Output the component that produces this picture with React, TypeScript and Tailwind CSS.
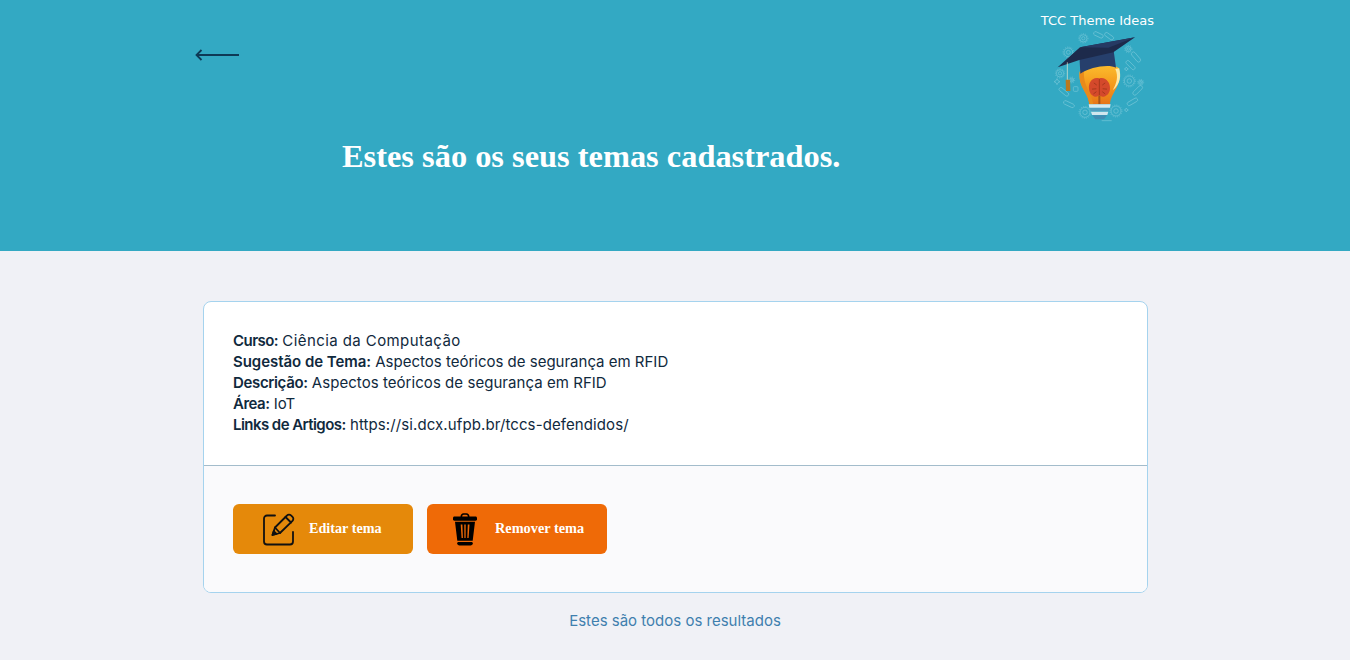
const bodyFont = "font-['Inter','Noto_Sans',sans-serif]";

const Arrow = () => (
  <svg width="45" height="14" viewBox="0 0 45 14" fill="none" stroke="#0e3a56">
    <path d="M44 7H2" strokeWidth="1.800" />
    <path d="M6.500 2L1.500 7l5 5" strokeWidth="1.800" />
  </svg>
);

const Gear = ({ x, y, r }: { x: number; y: number; r: number }) => (
  <g>
    <circle cx={x} cy={y} r={r} />
    <circle cx={x} cy={y} r={r * 0.45} />
    <circle cx={x} cy={y} r={r + 3} strokeDasharray="3 4" />
  </g>
);

const Logo = () => (
  <svg width="100" height="95" viewBox="60 75 300 285" className="ml-[5px] mt-px">
    <defs>
      <linearGradient id="bulb" x1="0" y1="0" x2="0" y2="1">
        <stop offset="0" stopColor="#fbbd2e" />
        <stop offset="0.5" stopColor="#f59a1c" />
        <stop offset="1" stopColor="#e67418" />
      </linearGradient>
    </defs>
    <g fill="none" stroke="#8ad0df" strokeWidth="2.200" opacity="0.7">
      <Gear x={160} y={100} r={11} />
      <Gear x={115} y={142} r={13} />
      <Gear x={90} y={205} r={11} />
      <Gear x={298} y={228} r={15} />
      <Gear x={165} y={322} r={15} />
      <Gear x={258} y={318} r={15} />
      <Gear x={332} y={232} r={6} />
      <Gear x={295} y={132} r={8} />
      <Gear x={125} y={225} r={6} />
      <rect x="190" y="84" width="30" height="11" rx="5" transform="rotate(25 205 90)" />
      <rect x="222" y="88" width="30" height="11" rx="5" transform="rotate(35 237 94)" />
      <rect x="300" y="150" width="36" height="12" rx="6" transform="rotate(50 318 156)" />
      <rect x="285" y="175" width="34" height="11" rx="5" transform="rotate(45 302 180)" />
      <rect x="305" y="250" width="36" height="12" rx="6" transform="rotate(-45 323 256)" />
      <rect x="85" y="255" width="34" height="11" rx="5" transform="rotate(40 102 260)" />
      <rect x="100" y="292" width="34" height="11" rx="5" transform="rotate(25 117 297)" />
      <rect x="290" y="285" width="34" height="11" rx="5" transform="rotate(-30 307 290)" />
      <rect x="130" y="245" width="14" height="14" rx="3" />
      <path d="M72 230l6-3 3-6 3 6 6 3-6 3-3 6-3-6z" />
      <path d="M283 192l4-2 2-4 2 4 4 2-4 2-2 4-2-4z" />
      <path d="M283 315l4-2 2-4 2 4 4 2-4 2-2 4-2-4z" />
      <path d="M215 347h30" />
    </g>
    <path d="M149 200 C144 248 176 262 178 298 H240 C242 262 276 248 268 190 C240 172 176 176 149 200Z" fill="url(#bulb)" />
    <path d="M149 200 C144 248 176 262 178 298 H190 C186 262 158 245 162 195Z" fill="#e98a1b" />
    <path d="M256 192 C266 214 260 236 248 256 C272 238 274 212 267 190Z" fill="#fde9a8" />
    <g transform="translate(208 248) scale(1.1) translate(-208 -248)">
      <path d="M208 223 C190 217 177 234 180 252 C182 269 198 278 208 269 C218 278 235 269 237 252 C239 234 224 217 208 223Z" fill="#d4492b" />
      <path d="M208 224V269M193 235l8 6M188 252l12-1M192 265l8-6M224 235l-8 6M229 252l-12-1M224 265l-8-6" stroke="#9f3519" strokeWidth="2.400" fill="none" />
    </g>
    <path d="M205 272h6v26h-6z" fill="#a8531a" />
    <path d="M176 298H242L240 308H178Z" fill="#d5e9f0" />
    <path d="M180 309H238L235 319H183Z" fill="#4f9cbe" />
    <path d="M183 320H235L232 330H186Z" fill="#cfe6ee" />
    <path d="M187 331H231L222 343H196Z" fill="#3f8db3" />
    <path d="M148 150 L151 206 C180 186 236 176 258 188 L250 130 Z" fill="#263f6c" />
    <path d="M83 187 L150 127 L315 97 L250 142 L148 165 Z" fill="#1d2a4b" />
    <path d="M150 127 L315 97 L235 128 Z" fill="#263a63" />
    <path d="M112 172V226" stroke="#dfe3cf" strokeWidth="2.200" />
    <path d="M107 224H120L121 258H108Z" fill="#b8791f" />
  </svg>
);

const EditIcon = () => (
  <svg width="32" height="33" viewBox="0 0 32 33" fill="none" stroke="#111" strokeWidth="1.800" strokeLinecap="round" strokeLinejoin="round" className="mt-[2px]">
    <path d="M12 2.500H4a3 3 0 0 0-3 3V28.500a3 3 0 0 0 3 3H27a3 3 0 0 0 3-3V19" />
    <path d="M9.500 22l2.500-7.500L24 2.500a2.800 2.800 0 0 1 4-.2l1.500 1.500a2.800 2.800 0 0 1 0 4L17 20Z" />
    <path d="M12 14.500l5 5.500M22.500 4l5.500 5.500" />
    <path d="M9.500 22l1.200-3.800 2.800 2.800z" fill="#111" />
  </svg>
);

const TrashIcon = () => (
  <svg width="24" height="33" viewBox="0 0 24 33" fill="#000" className="mt-[2px]">
    <path fillRule="evenodd" d="M7.500 3.500C7.500 1.500 8.800.200 10.500.200h3c1.700 0 3 1.300 3 3.300H22.500C23.400 3.500 24 4.100 24 5v1.500C24 7.200 23.400 7.700 22.500 7.700H1.500C.6 7.700 0 7.200 0 6.500V5C0 4.100.6 3.500 1.500 3.500ZM9.200 3.500h5.600c0-1-.6-1.700-1.500-1.700h-2.600c-.9 0-1.500.7-1.500 1.700Z" />
    <path fillRule="evenodd" d="M2 8.700H22L19.700 27.700H4.300ZM7.700 11.500l.9 13.500h1.300l-.5-13.500Zm3.600 0 .1 13.500h1.200l.1-13.500Zm3.500 0-.5 13.500h1.300l.9-13.500Z" />
    <path d="M5.500 29h13c.8 0 1.300.6 1.300 1.300 0 1.300-1 2.200-2.300 2.200h-11C5.200 32.500 4.200 31.600 4.200 30.300 4.200 29.600 4.700 29 5.500 29Z" />
  </svg>
);

const Row = ({ label, value, labelClass = "", valueClass = "" }: { label: string; value: string; labelClass?: string; valueClass?: string }) => (
  <p>
    <strong className={`font-semibold ${labelClass}`}>{label}</strong>{" "}
    <span className={valueClass}>{value}</span>
  </p>
);

export default function App() {
  return (
    <div className="min-h-[660px] bg-[#f0f1f6]">
      <header className="h-[251px] bg-[#33a9c3] pl-[195px] pr-[196px] pt-[13px]">
        <div className="flex items-start justify-between">
          <div className="pt-[35px]">
            <Arrow />
          </div>
          <div className="flex flex-col items-center">
            <span className="font-['DejaVu_Sans',sans-serif] text-[13px] leading-[16px] text-white">
              TCC Theme Ideas
            </span>
            <Logo />
          </div>
        </div>
        <h1 className="ml-[147px] mt-[11px] font-['Liberation_Serif',serif] text-[32.4px] font-bold leading-[40px] text-white">
          Estes são os seus temas cadastrados.
        </h1>
      </header>

      <main className="pt-[50px]">
        <section className={`ml-[203px] w-[945px] overflow-hidden rounded-lg border border-[#a5d3ee] bg-white text-[15px] leading-[21px] text-[#10293d] ${bodyFont}`}>
          <div className="border-b border-[#a3bccb] px-[29px] pb-[30px] pt-[28px]">
            <Row label="Curso:" value="Ciência da Computação" labelClass="tracking-[-0.55px]" valueClass="tracking-[0.42px]" />
            <Row label="Sugestão de Tema:" value="Aspectos teóricos de segurança em RFID" labelClass="tracking-[-0.05px]" />
            <Row label="Descrição:" value="Aspectos teóricos de segurança em RFID" labelClass="tracking-[-0.35px]" valueClass="tracking-[0.05px]" />
            <Row label="Área:" value="IoT" labelClass="tracking-[-0.5px]" />
            <Row label="Links de Artigos:" value="https://si.dcx.ufpb.br/tccs-defendidos/" labelClass="tracking-[-0.55px]" valueClass="tracking-[0.1px]" />
          </div>
          <div className="flex gap-[14px] bg-[#fafafc] px-[29px] py-[38px]">
            <button className="flex h-[50px] w-[180px] items-center rounded-md bg-[#e5890a] pb-px pl-[30px] font-['Liberation_Serif',serif] text-[14.2px] font-bold text-white">
              <EditIcon />
              <span className="ml-[14px]">Editar tema</span>
            </button>
            <button className="flex h-[50px] w-[180px] items-center rounded-md bg-[#ef6a07] pb-px pl-[26px] font-['Liberation_Serif',serif] text-[14.3px] font-bold text-white">
              <TrashIcon />
              <span className="ml-[18px]">Remover tema</span>
            </button>
          </div>
        </section>
        <p className={`mt-[17px] text-center text-[15px] leading-[21px] text-[#3f7fae] ${bodyFont}`}>
          Estes são todos os resultados
        </p>
      </main>
    </div>
  );
}
